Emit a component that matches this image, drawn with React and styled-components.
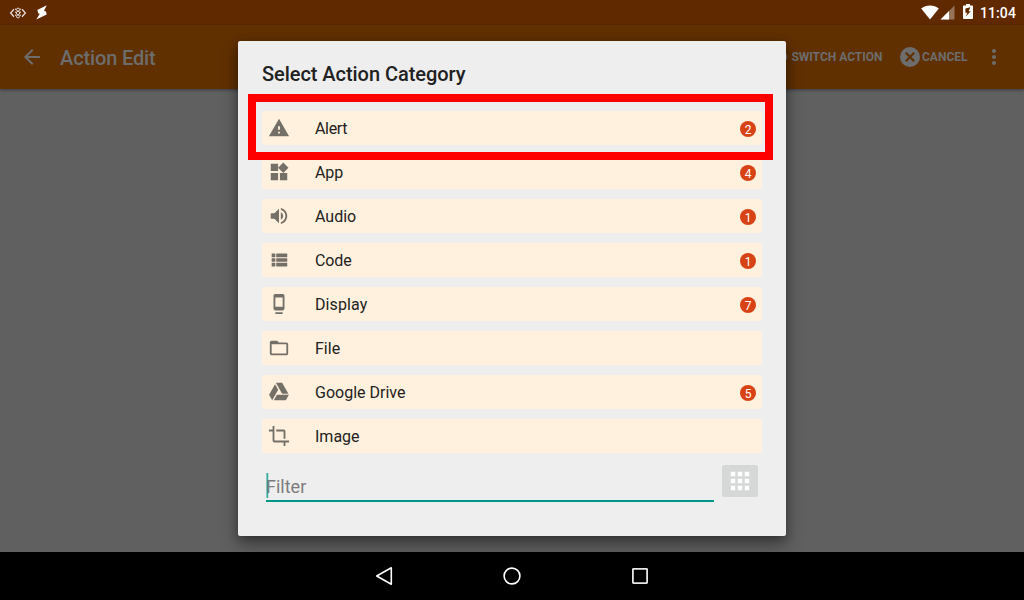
import React from "react";
import styled, { createGlobalStyle } from "styled-components";

const GlobalStyle = createGlobalStyle`
  * { box-sizing: border-box; }
  body { margin: 0; overflow: hidden; font-family: Roboto, "Liberation Sans", sans-serif; }
  svg { display: block; flex: none; }
`;

const Screen = styled.div`
  position: relative;
  display: flex;
  flex-direction: column;
  width: 1024px;
  height: 600px;
  background: #606060;
  overflow: hidden;
`;
const StatusBar = styled.header`
  display: flex;
  justify-content: space-between;
  height: 25px;
  flex: none;
  padding: 0 8px 0 9px;
  background: #602900;
  color: #fff;
`;
const Notifications = styled.div`
  display: flex;
  align-items: center;
  gap: 9px;
`;
const SystemStatus = styled.div`
  display: flex;
  align-items: center;
  gap: 1px;
`;
const Battery = styled.span`
  margin: 0 6px 2px 7px;
`;
const Clock = styled.span`
  padding-top: 2px;
  font-size: 14px;
  font-weight: 500;
  line-height: 23px;
  letter-spacing: 0.1px;
`;
const Toolbar = styled.div`
  display: flex;
  align-items: center;
  height: 64px;
  flex: none;
  padding: 0 18px 0 20px;
  background: #603000;
  color: #6d6d6d;
  box-shadow: 0 1px 3px rgba(0, 0, 0, 0.4);
`;
const ToolbarTitle = styled.h1`
  margin: 2px 0 0 16px;
  font-size: 20px;
  font-weight: 500;
  line-height: 24px;
  letter-spacing: -0.13px;
`;
const ToolbarActions = styled.div`
  display: flex;
  align-items: center;
  margin-left: auto;
`;
const ToolbarAction = styled.span`
  display: flex;
  align-items: center;
  gap: 2px;
  margin-right: ${(p) => p.$gap}px;
  font-size: 12px;
  font-weight: 700;
  line-height: 20px;
  white-space: nowrap;
`;
const Content = styled.main`
  flex: 1;
`;
const NavBar = styled.nav`
  position: relative;
  display: flex;
  justify-content: center;
  align-items: center;
  gap: 104px;
  height: 48px;
  flex: none;
  background: #000;
`;
const Dialog = styled.section`
  position: absolute;
  left: 238px;
  top: 41px;
  width: 548px;
  height: 495px;
  padding: 20px 24px;
  background: #eee;
  border-radius: 2px;
  box-shadow: 0 10px 18px rgba(0, 0, 0, 0.32), 0 2px 10px rgba(0, 0, 0, 0.3);
`;
const DialogTitle = styled.h2`
  margin: 0 0 24px;
  font-size: 20px;
  font-weight: 500;
  line-height: 26px;
  letter-spacing: -0.05px;
  color: #212121;
`;
const CategoryList = styled.ul`
  display: flex;
  flex-direction: column;
  gap: 10px;
  margin: 0;
  padding: 0;
  list-style: none;
`;
const CategoryRow = styled.li`
  display: flex;
  align-items: center;
  width: 500px;
  height: 34px;
  padding: 0 6px;
  background: #fff1de;
  border-radius: 2px;
  color: #757067;
`;
const CategoryName = styled.span`
  margin-left: 25px;
  padding-top: 2px;
  font-size: 16px;
  line-height: 20px;
  letter-spacing: ${(p) => p.$tracking}px;
  color: #232220;
`;
const Badge = styled.span`
  width: 16px;
  height: 16px;
  margin: 2px 0 0 auto;
  border-radius: 50%;
  background: #d84315;
  color: #fff;
  font-size: 12px;
  line-height: 18px;
  text-align: center;
`;
const FilterRow = styled.div`
  display: flex;
  gap: 8px;
  padding: 12px 4px 0;
`;
const FilterField = styled.div`
  display: flex;
  align-items: flex-end;
  width: 448px;
  height: 37px;
  border-bottom: 2px solid #009688;
  font-size: 18px;
  line-height: 27px;
  color: #7c7c7c;
`;
const Caret = styled.i`
  width: 3px;
  height: 25px;
  margin: 0 -3px 2px 0;
  background: linear-gradient(
    90deg,
    rgba(0, 150, 136, 0.45) 1px,
    rgba(0, 150, 136, 0.75) 1px 2px,
    rgba(0, 150, 136, 0.2) 2px
  );
`;
const GridButton = styled.div`
  display: flex;
  align-items: center;
  justify-content: center;
  width: 36px;
  height: 32px;
  border-radius: 2px;
  background: #d6d8d7;
`;
const Highlight = styled.div`
  position: absolute;
  left: 248px;
  top: 94px;
  width: 525px;
  height: 66px;
  border: 8px solid #f00;
`;

const icons = {
  alert: "M1 21h22L12 2 1 21zm12-3h-2v-2h2v2zm0-4h-2v-4h2v4z",
  app: "M13 13v8h8v-8h-8zM3 21h8v-8H3v8zM3 3v8h8V3H3zm13.66-1.31L11 7.34 16.66 13l5.66-5.66-5.66-5.65z",
  audio: "M3 9v6h4l5 5V4L7 9H3zm13.5 3c0-1.77-1.02-3.29-2.5-4.03v8.05c1.48-.73 2.5-2.25 2.5-4.02zM14 3.23v2.06c2.89.86 5 3.54 5 6.71s-2.11 5.85-5 6.71v2.06c4.01-.91 7-4.49 7-8.77s-2.99-7.86-7-8.77z",
  code: "M4 14h4v-4H4v4zm0 5h4v-4H4v4zM4 9h4V5H4v4zm5 5h12v-4H9v4zm0 5h12v-4H9v4zM9 5v4h12V5H9z",
  display: "M8 23h8v-2H8v2zm8-21.990L8 1c-1.100 0-2 .9-2 2v14c0 1.100.9 2 2 2h8c1.100 0 2-.9 2-2V3c0-1.100-.9-1.990-2-1.990zM16 15H8V5h8v10z",
  file: "M20 6h-8l-2-2H4c-1.1 0-1.99.9-1.99 2L2 18c0 1.1.9 2 2 2h16c1.1 0 2-.9 2-2V8c0-1.1-.9-2-2-2zm0 12H4V8h16v10z",
  drive: "M7.71 3.5L1.15 15l3.43 6 6.55-11.5L7.71 3.5zM9.73 15L6.3 21h13.12l3.43-6H9.73zM22.28 14L15.42 2H8.58l6.85 12h6.85z",
  crop: "M17 15h2V7c0-1.1-.9-2-2-2H9v2h8v8zM7 17V1H5v4H1v2h4v10c0 1.1.9 2 2 2h10v4h2v-4h4v-2H7z",
  back: "M20 11H7.83l5.59-5.59L12 4l-8 8 8 8 1.41-1.41L7.83 13H20v-2z",
  more: "M12 8c1.1 0 2-.9 2-2s-.9-2-2-2-2 .9-2 2 .9 2 2 2zm0 2c-1.1 0-2 .9-2 2s.9 2 2 2 2-.9 2-2-.9-2-2-2zm0 6c-1.1 0-2 .9-2 2s.9 2 2 2 2-.9 2-2-.9-2-2-2z",
};

const Icon = ({ name, size = 22 }) => (
  <svg width={size} height={size} viewBox="0 0 24 24" fill="currentColor">
    <path d={icons[name]} />
  </svg>
);

const categories = [
  { icon: "alert", name: "Alert", count: 2, tracking: -0.35 },
  { icon: "app", name: "App", count: 4, tracking: -0.1 },
  { icon: "audio", name: "Audio", count: 1 },
  { icon: "code", name: "Code", count: 1, tracking: -0.1 },
  { icon: "display", name: "Display", count: 7, tracking: 0.1 },
  { icon: "file", name: "File" },
  { icon: "drive", name: "Google Drive", count: 5 },
  { icon: "crop", name: "Image" },
];

const DebugIcon = () => (
  <svg width="18" height="12" viewBox="0 0 18 12" fill="none" stroke="#e6ddd8">
    <path d="M5 2.200 1.600 6 5 9.800M13 2.200 16.400 6 13 9.800" strokeWidth="1.300" />
    <circle cx="9" cy="2.600" r="1.500" />
    <circle cx="9" cy="6" r="1.700" />
    <circle cx="9" cy="9.400" r="1.500" />
    <path d="M6.500 1.500v9M11.500 1.500v9" strokeDasharray="1.500 1.500" opacity=".8" />
  </svg>
);
const BoltIcon = () => (
  <svg width="12" height="15" viewBox="0 0 12 15" fill="#fff">
    <path d="M10.8.2 1.3 4.9 2.4 8.4 3.8 8.8.3 14.6 10.7 9.4 10 6.4 8 5.8z" />
  </svg>
);
const WifiIcon = () => (
  <svg width="18" height="15" viewBox="0 0 18 15" fill="#fff">
    <path d="M9 14.5.2 3.5C2.6 1.5 5.6.4 9 .4s6.400 1.100 8.800 3.100z" />
  </svg>
);
const SignalIcon = () => (
  <svg width="15" height="15" viewBox="0 0 15 15" fill="#fff">
    <path d="M.5 14.500 14.500.500v14z" opacity=".35" />
    <path d="M.5 14.500 9 6v8.500z" />
  </svg>
);
const BatteryIcon = () => (
  <svg width="10" height="15" viewBox="0 0 10 15">
    <path d="M3 0h4v1.500h2.200q.8 0 .8.800v11.900q0 .8-.8.800H.8q-.8 0-.8-.8V2.300q0-.8.8-.8H3z" fill="#fff" />
    <path d="M7.400 3.200 2.400 4.600v4.200h1.900L2.800 12.600 7.800 7.300H5.600z" fill="#602900" />
  </svg>
);
const SwitchIcon = () => (
  <svg width="20" height="20" viewBox="0 0 20 20" fill="none" stroke="currentColor" strokeWidth="2">
    <circle cx="12.800" cy="10" r="4.500" />
  </svg>
);
const CancelIcon = () => (
  <svg width="20" height="20" viewBox="0 0 20 20">
    <circle cx="10" cy="10" r="10" fill="currentColor" />
    <path d="m5.800 5.800 8.400 8.400m0-8.400-8.400 8.400" stroke="#603000" strokeWidth="2.200" />
  </svg>
);
const GridIcon = () => (
  <svg width="20" height="20" viewBox="0 0 20 20" fill="#fff">
    {[1, 8, 15].map((y) =>
      [1, 8, 15].map((x) => (
        <rect key={`${x}-${y}`} x={x} y={y} width="4" height="4" stroke="#fff" strokeOpacity=".4" />
      ))
    )}
  </svg>
);

export default function App() {
  return (
    <Screen>
      <GlobalStyle />
      <StatusBar>
        <Notifications>
          <DebugIcon />
          <BoltIcon />
        </Notifications>
        <SystemStatus>
          <WifiIcon />
          <SignalIcon />
          <Battery>
            <BatteryIcon />
          </Battery>
          <Clock>11:04</Clock>
        </SystemStatus>
      </StatusBar>
      <Toolbar>
        <Icon name="back" size={24} />
        <ToolbarTitle>Action Edit</ToolbarTitle>
        <ToolbarActions>
          <ToolbarAction $gap={17.5}>
            <SwitchIcon />
            SWITCH ACTION
          </ToolbarAction>
          <ToolbarAction $gap={14.5}>
            <CancelIcon />
            CANCEL
          </ToolbarAction>
          <Icon name="more" size={24} />
        </ToolbarActions>
      </Toolbar>
      <Content />
      <Dialog>
        <DialogTitle>Select Action Category</DialogTitle>
        <CategoryList>
          {categories.map(({ icon, name, count, tracking = 0 }) => (
            <CategoryRow key={name}>
              <Icon name={icon} />
              <CategoryName $tracking={tracking}>{name}</CategoryName>
              {count && <Badge>{count}</Badge>}
            </CategoryRow>
          ))}
        </CategoryList>
        <FilterRow>
          <FilterField>
            <Caret />
            Filter
          </FilterField>
          <GridButton>
            <GridIcon />
          </GridButton>
        </FilterRow>
      </Dialog>
      <Highlight />
      <NavBar>
        <svg width="24" height="24" viewBox="0 0 24 24" fill="none" stroke="#fff" strokeWidth="1.600">
          <path d="M19.300 3.800v16.400L4.700 12z" strokeLinejoin="round" />
        </svg>
        <svg width="24" height="24" viewBox="0 0 24 24" fill="none" stroke="#fff" strokeWidth="1.600">
          <circle cx="12" cy="12" r="7.900" />
        </svg>
        <svg width="24" height="24" viewBox="0 0 24 24" fill="none" stroke="#e6e6e6" strokeWidth="1.800">
          <rect x="4.900" y="4.900" width="14.200" height="14.200" rx=".5" />
        </svg>
      </NavBar>
    </Screen>
  );
}
